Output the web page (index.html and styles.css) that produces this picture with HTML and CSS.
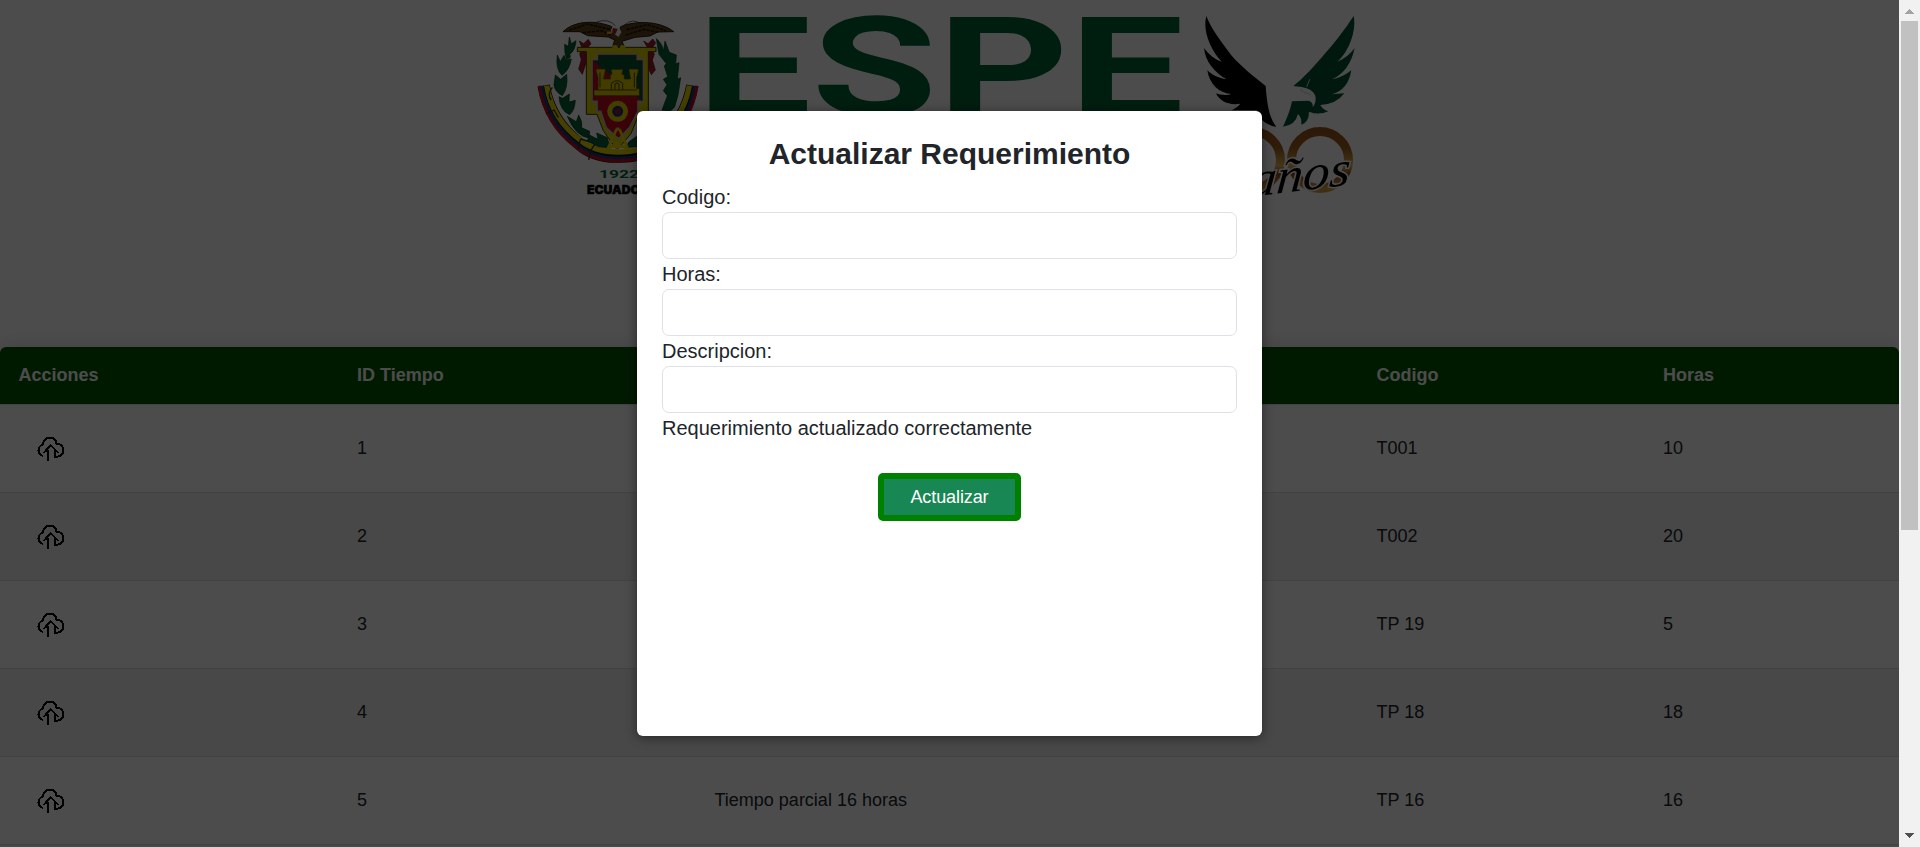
FILE: index.html
```html
<!DOCTYPE html>
<html lang="es">
<head>
<meta charset="utf-8">
<title>Actualizar Requerimiento</title>
<link rel="stylesheet" href="styles.css">
</head>
<body>
<svg class="defs" width="0" height="0">
  <symbol id="upload" viewBox="0 0 28 26">
    <path d="M6 20A6.500 6.500 0 0 1 1.500 14.500C1.500 10.500 3.500 9.500 6 8.500C6.500 4 9.500 1.500 13 1.500C16.500 1.500 19 4 19.500 7.500C24 8 26.500 11 26.500 14C26.500 18 23.500 20.500 21 20.500H17.500V15L20 15.500L13.500 9L8 15.500L10.500 15V25" fill="none" stroke="#000" stroke-width="2"/>
  </symbol>
</svg>
<main class="page">
  <header class="banner">
    <svg class="logo" viewBox="530 0 839 220" role="img" aria-label="ESPE">
      <defs>
        <linearGradient id="gold" x1="0" y1="0" x2="0" y2="1">
          <stop offset="0" stop-color="#98551a"/><stop offset=".3" stop-color="#a0601c"/>
          <stop offset=".6" stop-color="#e0b458"/><stop offset=".75" stop-color="#8c4a12"/><stop offset="1" stop-color="#d8a040"/>
        </linearGradient>
      </defs>
      <g transform="translate(520 0) scale(.33333)">
        <g fill="none" stroke-linejoin="round">
          <path d="M71 257C83 327 118 384 176 430Q222 472 295 470Q370 472 414 430C470 384 504 327 517 257" stroke="#111" stroke-width="37"/>
          <path d="M80 257C92 327 125 380 183 422Q224 456 295 456Q370 456 407 422C460 380 496 327 508 257" stroke="#e6d500" stroke-width="16"/>
          <path d="M66 257C78 330 113 389 172 434Q220 475 295 474Q370 475 418 434C475 389 512 330 523 257" stroke="#123a82" stroke-width="9"/>
          <path d="M58 257C70 336 107 396 168 441Q217 483 295 482Q373 483 424 441C481 396 519 336 531 257" stroke="#c40d23" stroke-width="9"/>
          <path d="M97 262Q80 285 94 300M78 342L102 330L115 352M173 448L182 417L226 430L210 455M206 480L212 452" stroke="#332c00" stroke-width="4"/>
        </g>
        <g fill="#006338" stroke="#082d1a" stroke-width="2">
          <path d="M148 111L154 131L168 122Q166 151 149 163Q156 175 139 178Q133 157 134 133L145 139Z"/>
          <path d="M112 165L121 185L132 166L138 181L154 177Q148 211 126 226Q106 208 112 165Z"/>
          <path d="M106 225L122 238L140 223Q145 263 127 287Q104 275 102 255Z"/>
          <path d="M117 290L128 295L148 282L147 306L166 301Q164 332 149 344Q120 333 117 290Z"/>
          <path d="M142 349L169 365L176 345Q188 365 185 383L209 394L207 414Q167 409 142 349Z"/>
          <path d="M208 405L234 418L230 399L262 413L270 444L235 440L202 423Z"/>
          <path d="M409 116Q427 130 431 154L435 123L448 157L469 165L467 192L477 188L472 238L482 233L474 285L464 321L452 332L426 331L442 287L430 272L441 254L430 238L443 230L433 198L439 191L417 163Z"/>
          <path d="M383 391L350 409L326 426L317 443L352 440Z"/>
        </g>
        <g fill="#a51528" stroke="#5a0712" stroke-width="2">
          <path d="M178 123L191 131L205 118L213 132L198 147L203 173L187 223L176 207L184 179L179 162L187 146Z"/>
          <path d="M371 123L384 131L398 117L407 128L394 148L403 162L397 180L406 210L394 224L386 206L386 171L377 156L385 147Z"/>
        </g>
        <path d="M172 142H408V155H385V342L354 349L333 401L297 444H286L250 392L231 343H199V155H172Z" fill="#ded000" stroke="#393300" stroke-width="3"/>
        <path d="M232 162H352V178H370V304H354V334L329 382L297 416L288 410L258 382L242 334H231V304H216V178H232Z" fill="#c10d1f" stroke="#bbb" stroke-width="5"/>
        <path d="M236 166H348V182H367V304Q295 240 219 184H236Z" fill="#005331"/>
        <path d="M228 207H256V213L251 233V237H271V226L276 222L273 208H309L306 222L313 226V237H331V233L327 213V207H355V213L350 233V266H358V287H222V270H234V233L228 213Z" fill="#dcca00" stroke="#554500" stroke-width="2"/>
        <path d="M274 269V250Q291 234 308 250V269M285 269V252Q291 246 297 252V269M234 270H350M240 218V262M343 218V262" fill="none" stroke="#554500" stroke-width="3"/>
        <circle cx="293" cy="334" r="24" fill="#183575" stroke="#e0d000" stroke-width="15"/>
        <circle cx="293" cy="334" r="8" fill="#b50e1d"/>
        <path d="M290 387L266 440H321L298 387M259 449L290 431L327 449" fill="none" stroke="#e6d500" stroke-width="8"/>
        <circle cx="293" cy="387" r="5" fill="#e6d500"/>
        <path d="M129 95C166 60 228 61 276 80L270 94L294 106L302 80C350 60 423 64 461 95L413 96L390 108L345 112L306 124L313 141H278L284 120L265 111L203 107L180 95Z" fill="#60441f" stroke="#241705" stroke-width="3"/>
        <path d="M148 91L202 72L270 88M320 89L382 74L438 92M189 98L245 92L274 106M317 105L372 88L416 97" fill="none" stroke="#241705" stroke-width="5" stroke-dasharray="10 3"/>
        <path d="M230 66Q265 54 286 77M311 76Q340 53 362 71" fill="none" stroke="#222" stroke-width="2"/>
        <path d="M275 85Q297 73 304 97L295 111L285 103Z" fill="#eee"/>
        <path d="M279 84L293 87L287 101L275 98Z" fill="#b3152a"/><path d="M261 95L279 94L274 102L260 101Z" fill="#e0b818"/>
        <circle cx="285" cy="144" r="9" fill="#ded000"/><circle cx="308" cy="144" r="9" fill="#ded000"/>
      </g>
      <text class="year" x="599" y="177.500" textLength="40" lengthAdjust="spacingAndGlyphs">1922</text>
      <text class="country" x="587" y="193.500" textLength="61" lengthAdjust="spacingAndGlyphs">ECUADOR</text>
      <text class="wordmark" transform="translate(696.500 115.500) scale(1.470 1)" x="0" y="0">ESPE</text>
      <g fill="none" stroke="url(#gold)" stroke-width="9">
        <circle cx="1252" cy="160" r="28.500"/><circle cx="1320" cy="160" r="28.500"/>
      </g>
      <g transform="translate(1180 0) scale(.33333)">
        <path d="M79 48C92 84 126 128 154 166C185 202 223 231 257 258C261 311 267 354 289 380C258 376 242 361 230 331L155 331C164 326 175 319 181 311C147 317 119 304 108 280C120 285 142 287 153 282C117 280 88 252 82 211C94 224 116 235 140 238C104 218 76 185 72 144C87 165 106 179 125 185C92 151 67 92 79 48Z"/>
        <path d="M521 48C497 84 465 128 438 157C403 199 370 235 340 258L365 261Q398 266 406 288C409 302 404 316 398 321Q400 306 386 302L336 304Q330 336 309 380Q346 376 354 342Q366 353 364 374Q387 367 387 335Q417 347 445 334Q427 328 421 315Q469 313 493 280L455 283Q504 271 514 211Q489 232 456 238Q509 214 524 144Q504 172 472 185C507 155 530 92 521 48Z" fill="#005331"/>
        <path d="M360 267Q370 278 392 284M389 238L380 261" fill="none" stroke="#c9d1cc" stroke-width="3"/>
      </g>
      <text class="script" transform="translate(1249 197) rotate(-7) skewX(-12)" x="0" y="0" textLength="101" lengthAdjust="spacingAndGlyphs">años</text>
    </svg>
  </header>
  <table class="times">
    <colgroup><col class="c-action"><col class="c-id"><col class="c-desc"><col class="c-code"><col></colgroup>
    <thead><tr><th>Acciones</th><th>ID Tiempo</th><th></th><th>Codigo</th><th>Horas</th></tr></thead>
    <tbody>
      <tr><td><svg class="icon"><use href="#upload"/></svg></td><td>1</td><td></td><td>T001</td><td>10</td></tr>
      <tr><td><svg class="icon"><use href="#upload"/></svg></td><td>2</td><td></td><td>T002</td><td>20</td></tr>
      <tr><td><svg class="icon"><use href="#upload"/></svg></td><td>3</td><td></td><td>TP 19</td><td>5</td></tr>
      <tr><td><svg class="icon"><use href="#upload"/></svg></td><td>4</td><td></td><td>TP 18</td><td>18</td></tr>
      <tr><td><svg class="icon"><use href="#upload"/></svg></td><td>5</td><td>Tiempo parcial 16 horas</td><td>TP 16</td><td>16</td></tr>
      <tr><td></td><td></td><td></td><td></td><td></td></tr>
    </tbody>
  </table>
</main>
<aside class="scrollbar">
  <svg class="arrow" viewBox="0 0 21 21"><path d="M6 14H15L10.500 9Z" fill="#a3a3a3"/></svg>
  <div class="thumb"></div>
  <svg class="arrow" viewBox="0 0 21 21"><path d="M6 7H15L10.500 12Z" fill="#505050"/></svg>
</aside>
<div class="overlay">
  <form class="modal">
    <h2>Actualizar Requerimiento</h2>
    <label for="codigo">Codigo:</label><input id="codigo">
    <label for="horas">Horas:</label><input id="horas">
    <label for="descripcion">Descripcion:</label><input id="descripcion">
    <p>Requerimiento actualizado correctamente</p>
    <button type="button">Actualizar</button>
  </form>
</div>
</body>
</html>
```
FILE: styles.css
```css
* { box-sizing: border-box; }
body {
  margin: 0;
  height: 847px;
  overflow: hidden;
  display: flex;
  background: #fff;
  color: #212529;
  font-family: "Liberation Sans", Arial, sans-serif;
}
.defs { position: absolute; }
.page { width: 1899px; height: 847px; overflow: hidden; flex: none; }
.banner { height: 347px; display: flex; justify-content: center; align-items: flex-start; }
.logo { width: 839px; height: 220px; flex: none; }
.wordmark { font: 700 139px Roboto, sans-serif; fill: #006735; }
.year { font: 700 10px Roboto, sans-serif; fill: #006735; }
.country { font: 900 12px Inter, sans-serif; fill: #000; stroke: #000; stroke-width: .5px; }
.script {
  font: italic 400 49px "Liberation Serif", serif;
  fill: #000;
  stroke: #fff;
  stroke-width: 3px;
  paint-order: stroke;
}

.times {
  width: 1899px;
  table-layout: fixed;
  border-collapse: separate;
  border-spacing: 0;
  border-radius: 6px 6px 0 0;
  box-shadow: 0 0 20px rgba(0, 0, 0, .15);
  overflow: hidden;
  font-size: 18px;
}
.c-action { width: 338.500px; }
.c-id { width: 357.500px; }
.c-desc { width: 662px; }
.c-code { width: 286.500px; }
th, td { padding: 0 18px 0 18.500px; text-align: left; vertical-align: middle; line-height: 27px; }
th { height: 58px; border-bottom: 1px solid #ddd; background: #005800; background-clip: padding-box; color: #fff; font-weight: 700; }
td { height: 88px; border-bottom: 1px solid #ddd; }
tbody tr:nth-child(even) { background: #f0f0f0; }
.icon { display: block; width: 28px; height: 26px; margin: 1px 0 0 18.500px; shape-rendering: crispEdges; }

.scrollbar { width: 21px; height: 847px; flex: none; display: flex; flex-direction: column; align-items: center; background: #f1f1f1; }
.arrow { width: 21px; height: 21px; flex: none; shape-rendering: crispEdges; }
.thumb { width: 17px; height: 509px; margin-bottom: auto; background: #c1c1c1; }

.overlay {
  position: absolute;
  top: 0;
  left: 0;
  width: 1899px;
  height: 847px;
  display: flex;
  align-items: center;
  justify-content: center;
  background: rgba(0, 0, 0, .7);
}
.modal {
  width: 625px;
  height: 625px;
  padding: 25px;
  display: flex;
  flex-direction: column;
  background: #fff;
  border-radius: 6px;
  box-shadow: 0 2px 12px rgba(0, 0, 0, .45);
  font-size: 20px;
  line-height: 30px;
}
h2 { margin: 0 0 10px; font-size: 30px; line-height: 36px; font-weight: 700; text-align: center; }
input { width: 100%; height: 47px; border: 1px solid #dee2e6; border-radius: 7px; background: #fff; }
p { margin: 0; }
button {
  align-self: center;
  width: 143px;
  height: 48px;
  margin-top: 30px;
  padding: 0;
  border: 6px solid #008000;
  border-radius: 5px;
  background: #198754;
  color: #fff;
  font: 18px "Liberation Sans", Arial, sans-serif;
  letter-spacing: -.1px;
}
```
